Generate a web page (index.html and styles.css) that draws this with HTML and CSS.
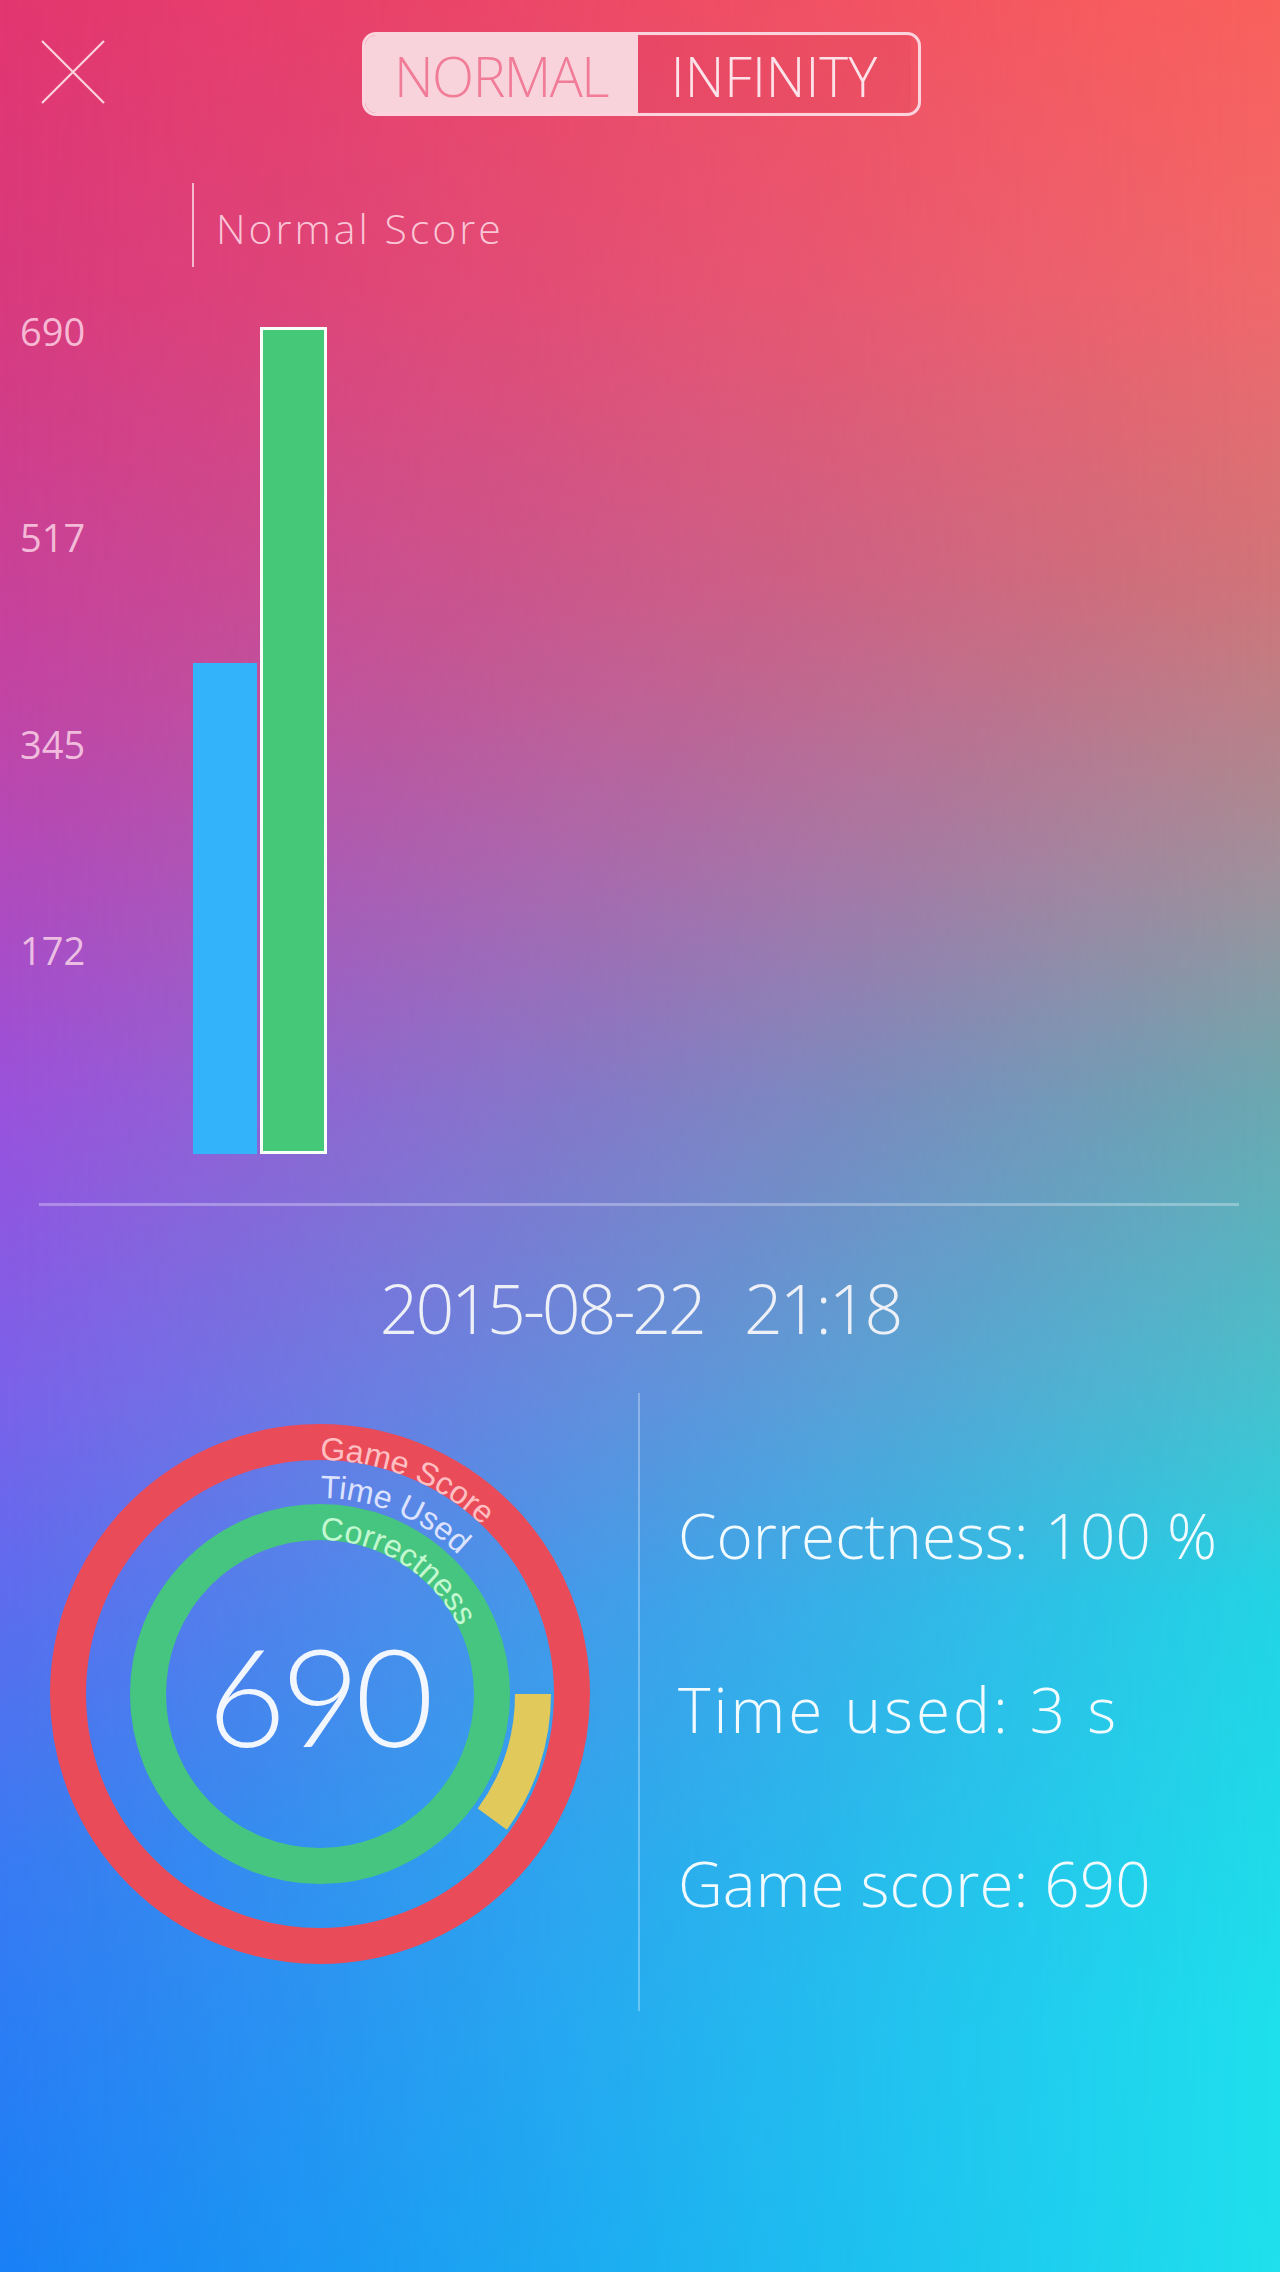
FILE: index.html
```html
<!DOCTYPE html>
<html lang="en">
<head>
<meta charset="utf-8">
<title>Score history</title>
<link rel="stylesheet" href="styles.css">
</head>
<body>
<div class="screen">
  <div class="content">
    <header class="topbar">
      <button class="close" aria-label="Close">
        <svg width="66" height="66" viewBox="0 0 66 66"><path d="M2 2 L64 64 M64 2 L2 64" stroke="#fbd2dc" stroke-width="2.2" fill="none"/></svg>
      </button>
      <div class="mode-toggle">
        <span class="mode mode-active">NORMAL</span>
        <span class="mode mode-inf">INFINITY</span>
      </div>
      <div class="spacer"></div>
    </header>

    <div class="legend"><span class="legend-text">Normal Score</span></div>

    <section class="chart">
      <div class="axis">
        <div class="tick">690</div>
        <div class="tick">517</div>
        <div class="tick">345</div>
        <div class="tick">172</div>
      </div>
      <div class="bars">
        <div class="bar bar-prev" style="height:491px"></div>
        <div class="bar bar-current" style="height:827px"></div>
      </div>
    </section>

    <hr class="rule">

    <div class="date"><span>2015-08-22</span><span class="date-time">21:18</span></div>

    <section class="stats">
      <div class="ring-wrap">
        <svg class="rings" width="638" height="618" viewBox="0 0 638 618">
          <defs>
            <path id="p-score" d="M320 67 A234 234 0 1 1 320 535 A234 234 0 1 1 320 67"/>
            <path id="p-time" d="M320 105 A196 196 0 1 1 320 497 A196 196 0 1 1 320 105"/>
            <path id="p-correct" d="M320 147 A154 154 0 1 1 320 455 A154 154 0 1 1 320 147"/>
          </defs>
          <circle cx="320" cy="301" r="252" fill="none" stroke="#e94b59" stroke-width="36"/>
          <path d="M533 301 A213 213 0 0 1 492.3 426.2" fill="none" stroke="#e1ca5b" stroke-width="36"/>
          <circle cx="320" cy="301" r="172" fill="none" stroke="#45c580" stroke-width="36"/>
          <text class="ring-label label-score"><textPath href="#p-score">Game Score</textPath></text>
          <text class="ring-label label-time"><textPath href="#p-time">Time Used</textPath></text>
          <text class="ring-label label-correct"><textPath href="#p-correct">Correctness</textPath></text>
          <text class="ring-value" x="318" y="354" text-anchor="middle">690</text>
        </svg>
      </div>
      <div class="divider"></div>
      <ul class="stat-list">
        <li>Correctness: 100 %</li>
        <li class="stat-wide">Time used: 3 s</li>
        <li>Game score: 690</li>
      </ul>
    </section>
  </div>
</div>
</body>
</html>
```

FILE: styles.css
```css
* { box-sizing: border-box; }

html, body {
  margin: 0;
  padding: 0;
}

body {
  width: 1280px;
  height: 2272px;
  overflow: hidden;
  font-family: "Open Sans", "Noto Sans", sans-serif;
  font-weight: 300;
}

.screen {
  position: relative;
  width: 1280px;
  height: 2272px;
  overflow: hidden;
  background: linear-gradient(to bottom,
    #e23670 0px,
    #d83a7e 300px,
    #c244a4 700px,
    #9a52dc 1100px,
    #7a62ea 1400px,
    #3a7af2 1850px,
    #1a80f6 2272px);
}

.screen::before {
  content: "";
  position: absolute;
  inset: 0;
  background: linear-gradient(to bottom,
    #f9615c 0px,
    #f0686a 290px,
    #d07478 580px,
    #a0909a 870px,
    #6aa8b0 1100px,
    #48c0cc 1380px,
    #22d4e4 1600px,
    #1ee0ec 2030px,
    #1fe0ec 2272px);
  -webkit-mask-image: linear-gradient(to right, transparent, #000);
  mask-image: linear-gradient(to right, transparent, #000);
}

.content {
  position: relative;
  z-index: 1;
}

/* ---------- top bar ---------- */
.topbar {
  display: grid;
  grid-template-columns: 1fr auto 1fr;
  align-items: start;
  padding-top: 32px;
  padding-left: 2px;
}

.close {
  justify-self: start;
  margin: 7px 0 0 38px;
  padding: 0;
  border: 0;
  background: none;
  width: 66px;
  height: 66px;
  display: block;
}

.close svg { display: block; }

.mode-toggle {
  display: flex;
  width: 559px;
  height: 84px;
  border: 3px solid #fbd4de;
  border-radius: 14px;
  overflow: hidden;
}

.mode {
  flex: 1 1 0;
  display: flex;
  align-items: center;
  justify-content: center;
  font-size: 55px;
  letter-spacing: -1.5px;
  color: #fde3e9;
  padding-top: 2px;
}

.mode-active {
  background: #f9d3dc;
  color: #f07c98;
}

.mode-inf {
  margin: 1px 7px 1px 0;
  background: rgba(205, 40, 80, 0.12);
  letter-spacing: 0;
}

/* ---------- legend ---------- */
.legend {
  margin: 67px 0 0 192px;
  height: 84px;
  border-left: 2px solid rgba(255, 225, 235, 0.75);
  display: flex;
  align-items: center;
  padding: 6px 0 0 22px;
}

.legend-text {
  font-size: 41px;
  color: rgba(255, 222, 232, 0.85);
  letter-spacing: 3px;
}

/* ---------- chart ---------- */
.chart {
  display: flex;
  margin-top: 41px;
  height: 846px;
}

.axis {
  width: 193px;
  padding: 3px 0 0 20px;
  display: flex;
  flex-direction: column;
}

.tick {
  height: 40px;
  line-height: 40px;
  margin-bottom: 166.25px;
  font-size: 38px;
  font-weight: 400;
  color: rgba(255, 220, 235, 0.8);
}

.bars {
  display: flex;
  align-items: flex-end;
  gap: 3px;
}

.bar { flex: 0 0 auto; }

.bar-prev {
  width: 64px;
  background: #33b3f9;
}

.bar-current {
  width: 67px;
  background: #45c978;
  border: 3px solid #f6fff8;
}

/* ---------- rule + date ---------- */
.rule {
  margin: 49px 41px 0 39px;
  height: 3px;
  border: 0;
  background: rgba(255, 255, 255, 0.3);
}

.date {
  margin-top: 62px;
  height: 80px;
  line-height: 80px;
  text-align: center;
  font-size: 68px;
  letter-spacing: -3px;
  color: #eef0f8;
  white-space: nowrap;
}

.date-time {
  margin-left: 40px;
}

/* ---------- stats ---------- */
.stats {
  display: flex;
  margin-top: 45px;
  height: 618px;
}

.ring-wrap {
  width: 638px;
  flex: 0 0 638px;
}

.rings { display: block; }

.ring-label {
  font-family: "Liberation Sans", Arial, sans-serif;
  font-size: 32px;
}

.label-score { fill: #ffbfc2; }
.label-time { fill: #dde3ff; }
.label-correct { fill: #c4f8d0; }

.ring-value {
  font-family: "Lato", "Open Sans", sans-serif;
  font-weight: 300;
  font-size: 136px;
  letter-spacing: -5px;
  fill: #f2f6ff;
}

.divider {
  width: 2px;
  flex: 0 0 2px;
  background: rgba(255, 255, 255, 0.3);
}

.stat-list {
  list-style: none;
  margin: 0;
  padding: 55px 0 0 38px;
}

.stat-list li {
  height: 174px;
  line-height: 174px;
  font-size: 62px;
  color: #f1fbff;
  white-space: nowrap;
}

.stat-list .stat-wide {
  letter-spacing: 3px;
}
```
